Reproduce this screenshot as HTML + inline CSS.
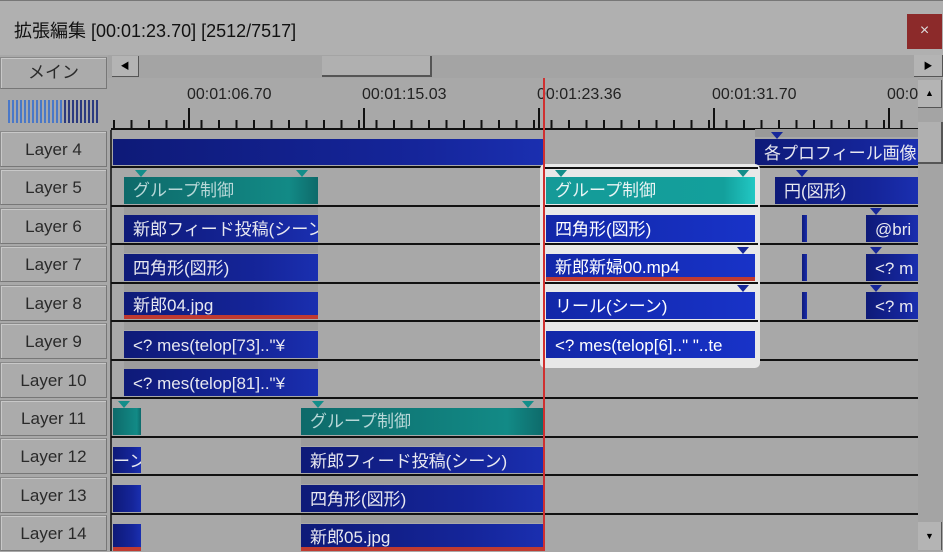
<!DOCTYPE html><html><head><meta charset="utf-8"><style>
*{margin:0;padding:0;box-sizing:border-box}
body{width:943px;height:551px;overflow:hidden;background:#a8a8a8;font-family:"Liberation Sans","Noto Sans CJK JP",sans-serif;position:relative}
.a{position:absolute}
.title{left:0;top:0;width:943px;height:55px;background:#b0b0b0;border-top:1px solid #777}
.lb{left:0;width:107px;height:36px;background:#ababab;border:1px solid #8a8a8a;border-right-color:#777;border-bottom-color:#777;box-shadow:inset 1px 1px 0 #c8c8c8;font-size:17px;color:#2a2a2a;text-align:center;line-height:36px}
.sep{left:111px;width:807px;height:2px;background:#111}
.b{background:linear-gradient(90deg,#0e1a78,#15259a 70%,#1a2fb0);color:#e8e8f0;font-size:17px;line-height:30px;padding-left:9px;white-space:nowrap;overflow:hidden}
.t{background:linear-gradient(90deg,#0e6a6a,#128a86 85%,#0e6a6a);color:#b8d8d8;font-size:17px;line-height:28px;padding-left:9px;white-space:nowrap;overflow:hidden}
.tt{background:linear-gradient(90deg,#159a98,#13a09c 85%,#22c8c4);color:#e8f4f4}
.bb{background:linear-gradient(90deg,#1227a8,#1833c8);color:#fff}
.g{background:#9c9c9c;height:8px}
.red{border-bottom:4px solid #c03a30}
.tri{width:0;height:0;border-left:6px solid transparent;border-right:6px solid transparent;border-top:7px solid #138e8a}
.trib{border-top-color:#16279a}
</style></head><body>
<div class="a title"></div>
<div class="a" style="left:14px;top:17px;font-size:18px;color:#111">拡張編集 [00:01:23.70] [2512/7517]</div>
<div class="a" style="left:907px;top:14px;width:35px;height:35px;background:#8c2a2a;color:#ddd;font-size:16px;text-align:center;line-height:34px">×</div>
<div class="a lb" style="top:57px;height:32px;line-height:30px">メイン</div>
<div class="a" style="left:108px;top:55px;width:810px;height:23px;background:#a4a4a4"></div>
<div class="a" style="left:112px;top:56px;width:27px;height:21px;background:#b4b4b4;border-right:1px solid #555;border-bottom:1px solid #555;font-size:9px;text-align:center;line-height:21px">◀</div>
<div class="a" style="left:322px;top:56px;width:110px;height:21px;background:#b0b0b0;border-right:2px solid #555;border-bottom:2px solid #555"></div>
<div class="a" style="left:914px;top:55px;width:29px;height:22px;background:#b4b4b4;border-right:1px solid #555;border-bottom:1px solid #555;font-size:9px;text-align:center;line-height:22px">▶</div>
<div class="a" style="left:8px;top:100px;width:91px;height:23px;background:repeating-linear-gradient(90deg,#4a78c8 0 2px,transparent 2px 4px)"></div>
<div class="a" style="left:64px;top:100px;width:35px;height:23px;background:repeating-linear-gradient(90deg,#2a3a80 0 2px,#a8a8a8 2px 4px)"></div>
<div class="a" style="left:918px;top:78px;width:25px;height:473px;background:#a4a4a4"></div>
<div class="a" style="left:918px;top:80px;width:24px;height:28px;background:#b4b4b4;border-right:1px solid #555;border-bottom:1px solid #555;font-size:9px;text-align:center;line-height:26px">▲</div>
<div class="a" style="left:918px;top:122px;width:25px;height:42px;background:#b0b0b0;border-right:2px solid #555;border-bottom:2px solid #555"></div>
<div class="a" style="left:918px;top:522px;width:24px;height:28px;background:#b4b4b4;border-right:1px solid #555;font-size:9px;text-align:center;line-height:28px">▼</div>
<div class="a" style="left:187px;top:86px;font-size:16px;color:#222">00:01:06.70</div>
<div class="a" style="left:362px;top:86px;font-size:16px;color:#222">00:01:15.03</div>
<div class="a" style="left:537px;top:86px;font-size:16px;color:#222">00:01:23.36</div>
<div class="a" style="left:712px;top:86px;font-size:16px;color:#222">00:01:31.70</div>
<div class="a" style="left:887px;top:86px;font-size:16px;color:#222;width:31px;overflow:hidden">00:01</div>
<div class="a" style="left:111px;top:128px;width:807px;height:2px;background:#111"></div>
<div class="a" style="left:113px;top:120px;width:805px;height:8px;background:repeating-linear-gradient(90deg,#111 0 2px,transparent 2px 17.5px)"></div>
<div class="a" style="left:188px;top:108px;width:730px;height:20px;background:repeating-linear-gradient(90deg,#111 0 2px,transparent 2px 175px)"></div>
<div class="a lb" style="top:131px">Layer 4</div>
<div class="a lb" style="top:169px">Layer 5</div>
<div class="a lb" style="top:208px">Layer 6</div>
<div class="a lb" style="top:246px">Layer 7</div>
<div class="a lb" style="top:285px">Layer 8</div>
<div class="a lb" style="top:323px">Layer 9</div>
<div class="a lb" style="top:362px">Layer 10</div>
<div class="a lb" style="top:400px">Layer 11</div>
<div class="a lb" style="top:438px">Layer 12</div>
<div class="a lb" style="top:477px">Layer 13</div>
<div class="a lb" style="top:515px">Layer 14</div>
<div class="a" style="left:110px;top:130px;width:2px;height:421px;background:#333"></div>
<div class="a sep" style="top:166px"></div><div class="a sep" style="top:205px"></div><div class="a sep" style="top:243px"></div><div class="a sep" style="top:282px"></div><div class="a sep" style="top:320px"></div><div class="a sep" style="top:359px"></div><div class="a sep" style="top:397px"></div><div class="a sep" style="top:436px"></div><div class="a sep" style="top:474px"></div><div class="a sep" style="top:513px"></div>
<div class="a b" style="left:113px;top:139px;width:431px;height:26px"></div>
<div class="a" style="left:755px;top:129px;width:163px;height:8px;background:#999"></div>
<div class="a b" style="left:755px;top:139px;width:163px;height:26px">各プロフィール画像</div>
<div class="a tri trib" style="left:771px;top:132px"></div>
<div class="a t" style="left:124px;top:177px;width:194px;height:27px">グループ制御</div>
<div class="a tri" style="left:135px;top:170px"></div><div class="a tri" style="left:296px;top:170px"></div>
<div class="a g" style="left:124px;top:207px;width:194px"></div>
<div class="a b" style="left:124px;top:215px;width:194px;height:27px">新郎フィード投稿(シーン)</div>
<div class="a g" style="left:124px;top:245px;width:194px"></div>
<div class="a b" style="left:124px;top:254px;width:194px;height:27px">四角形(図形)</div>
<div class="a g" style="left:124px;top:284px;width:194px"></div>
<div class="a b red" style="left:124px;top:292px;width:194px;height:27px;line-height:28px">新郎04.jpg</div>
<div class="a g" style="left:124px;top:322px;width:194px"></div>
<div class="a b" style="left:124px;top:331px;width:194px;height:27px">&lt;? mes(telop[73].."¥</div>
<div class="a g" style="left:124px;top:361px;width:194px"></div>
<div class="a b" style="left:124px;top:369px;width:194px;height:27px">&lt;? mes(telop[81].."¥</div>
<div class="a t" style="left:113px;top:408px;width:28px;height:27px"></div>
<div class="a tri" style="left:118px;top:401px"></div>
<div class="a b" style="left:113px;top:447px;width:28px;height:26px;padding-left:0">ーン)</div>
<div class="a b" style="left:113px;top:485px;width:28px;height:27px"></div>
<div class="a b red" style="left:113px;top:524px;width:28px;height:27px"></div>
<div class="a t" style="left:301px;top:408px;width:243px;height:27px">グループ制御</div>
<div class="a tri" style="left:312px;top:401px"></div><div class="a tri" style="left:522px;top:401px"></div>
<div class="a g" style="left:301px;top:438px;width:243px"></div>
<div class="a b" style="left:301px;top:447px;width:243px;height:26px">新郎フィード投稿(シーン)</div>
<div class="a g" style="left:301px;top:476px;width:243px"></div>
<div class="a b" style="left:301px;top:485px;width:243px;height:27px">四角形(図形)</div>
<div class="a g" style="left:301px;top:515px;width:243px"></div>
<div class="a b red" style="left:301px;top:524px;width:243px;height:27px;line-height:28px">新郎05.jpg</div>
<div class="a" style="left:540px;top:164px;width:220px;height:204px;background:#e8e8e8;border-radius:5px"></div>
<div class="a" style="left:544px;top:167px;width:214px;height:2px;background:#111"></div>
<div class="a t tt" style="left:546px;top:177px;width:209px;height:27px">グループ制御</div>
<div class="a tri" style="left:555px;top:170px"></div><div class="a tri" style="left:737px;top:170px"></div>
<div class="a" style="left:544px;top:205px;width:214px;height:2px;background:#111"></div>
<div class="a b bb" style="left:546px;top:215px;width:209px;height:27px">四角形(図形)</div>
<div class="a" style="left:544px;top:243px;width:214px;height:2px;background:#111"></div>
<div class="a b bb red" style="left:546px;top:254px;width:209px;height:27px;line-height:28px">新郎新婦00.mp4</div>
<div class="a tri trib" style="left:737px;top:247px"></div>
<div class="a" style="left:544px;top:282px;width:214px;height:2px;background:#111"></div>
<div class="a b bb" style="left:546px;top:292px;width:209px;height:27px">リール(シーン)</div>
<div class="a tri trib" style="left:737px;top:285px"></div>
<div class="a" style="left:544px;top:320px;width:214px;height:2px;background:#111"></div>
<div class="a b bb" style="left:546px;top:331px;width:209px;height:27px">&lt;? mes(telop[6].." "..te</div>
<div class="a b" style="left:775px;top:177px;width:143px;height:27px">円(図形)</div>
<div class="a tri trib" style="left:796px;top:170px"></div>
<div class="a b" style="left:802px;top:215px;width:5px;height:27px;padding:0"></div>
<div class="a b" style="left:802px;top:254px;width:5px;height:27px;padding:0"></div>
<div class="a b" style="left:802px;top:292px;width:5px;height:27px;padding:0"></div>
<div class="a b" style="left:866px;top:215px;width:52px;height:27px">@bri</div>
<div class="a b" style="left:866px;top:254px;width:52px;height:27px">&lt;? m</div>
<div class="a b" style="left:866px;top:292px;width:52px;height:27px">&lt;? m</div>
<div class="a tri trib" style="left:870px;top:208px"></div><div class="a tri trib" style="left:870px;top:247px"></div><div class="a tri trib" style="left:870px;top:285px"></div>
<div class="a" style="left:543px;top:78px;width:2px;height:473px;background:#d03030"></div>
</body></html>
